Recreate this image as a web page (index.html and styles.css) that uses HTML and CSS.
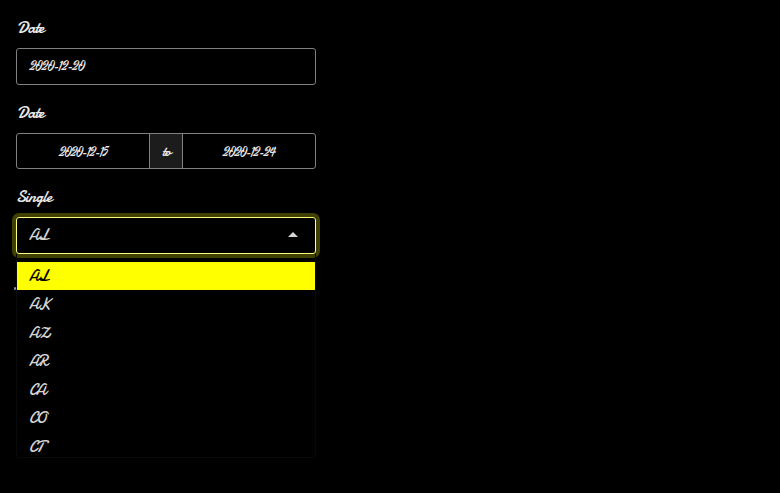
FILE: index.html
```
<!DOCTYPE html>
<html lang="en">
<head>
<meta charset="utf-8">
<title>Form controls</title>
<link rel="stylesheet" href="styles.css">
</head>
<body>
<main class="form">
  <section class="field">
    <div class="label">Date</div>
    <div class="control"><span class="date">2020-12-20</span></div>
  </section>
  <section class="field">
    <div class="label">Date</div>
    <div class="control range">
      <div class="range-end"><span class="date">2020-12-15</span></div>
      <div class="addon">to</div>
      <div class="range-end"><span class="date">2020-12-24</span></div>
    </div>
  </section>
  <section class="field select-field">
    <div class="label single">Single</div>
    <div class="control select">
      <span class="value">AL</span>
      <svg class="arrow" width="10" height="5" viewBox="0 0 10 5"><path d="M0 5L5 0L10 5Z"/></svg>
    </div>
    <i class="tick"></i>
    <ul class="menu">
      <li class="active"><span class="value">AL</span></li>
      <li><span class="value">AK</span></li>
      <li><span class="value">AZ</span></li>
      <li><span class="value">AR</span></li>
      <li><span class="value">CA</span></li>
      <li><span class="value">CO</span></li>
      <li><span class="value">CT</span></li>
    </ul>
  </section>
</main>
</body>
</html>
```
FILE: styles.css
```
* { box-sizing: border-box; }
body {
  margin: 0;
  min-height: 493px;
  background: #000;
  color: #e8e8e8;
  font-family: Yellowtail, Damion, "Open Sans", cursive;
}
.form { width: 332px; padding: 16px; }
.field { margin-bottom: 16px; }
.label {
  height: 24px;
  margin-bottom: 8px;
  padding-left: 1px;
  font-size: 17px;
  line-height: 24px;
  letter-spacing: -.9px;
}
.single { padding-left: 0; letter-spacing: -.7px; }
.control {
  display: flex;
  align-items: center;
  height: 37px;
  padding: 0 12px;
  border: 1px solid #808080;
  border-radius: 3px;
}
.date {
  font-family: Yellowtail, Yesteryear, "Open Sans", cursive;
  font-size: 12px;
  line-height: 18px;
  letter-spacing: -.75px;
}
.control > .date { padding: 1px 0 0 1px; }
.range { height: 36px; padding: 0; }
.range-end { flex: 1; text-align: center; padding: 0 0 1px 1px; }
.range-end .date { letter-spacing: -1px; }
.addon {
  display: flex;
  align-items: center;
  justify-content: center;
  width: 34px;
  height: 100%;
  border: solid #808080;
  border-width: 0 1px;
  background: #1c1c1c;
  font-size: 15px;
  letter-spacing: -1.2px;
}
.select-field { position: relative; }
.select {
  justify-content: space-between;
  padding-right: 17px;
  border-color: #ffff80;
  box-shadow: 0 0 0 4px #404000;
}
.value {
  margin-top: -2px;
  font-size: 16px;
  line-height: 20px;
  letter-spacing: -1px;
  color: #d4d4d4;
}
.arrow { fill: #d4d4d4; margin-top: -2px; }
.tick {
  position: absolute;
  left: -2px;
  top: 102px;
  width: 2px;
  height: 3px;
  background: #829aaa;
  border-radius: 1px;
}
.menu {
  position: absolute;
  top: 69px;
  left: 0;
  width: 300px;
  height: 204px;
  margin: 0;
  padding: 8px 0 0;
  list-style: none;
  border: 1px solid #080909;
  border-top: 0;
  border-radius: 0 0 3px 3px;
  z-index: 1;
}
.menu li {
  display: flex;
  align-items: center;
  height: 28.45px;
  padding-left: 12px;
}
.menu .value { margin-top: -.4px; }
.active { background: #ff0; }
.active .value { color: #000; }
```
